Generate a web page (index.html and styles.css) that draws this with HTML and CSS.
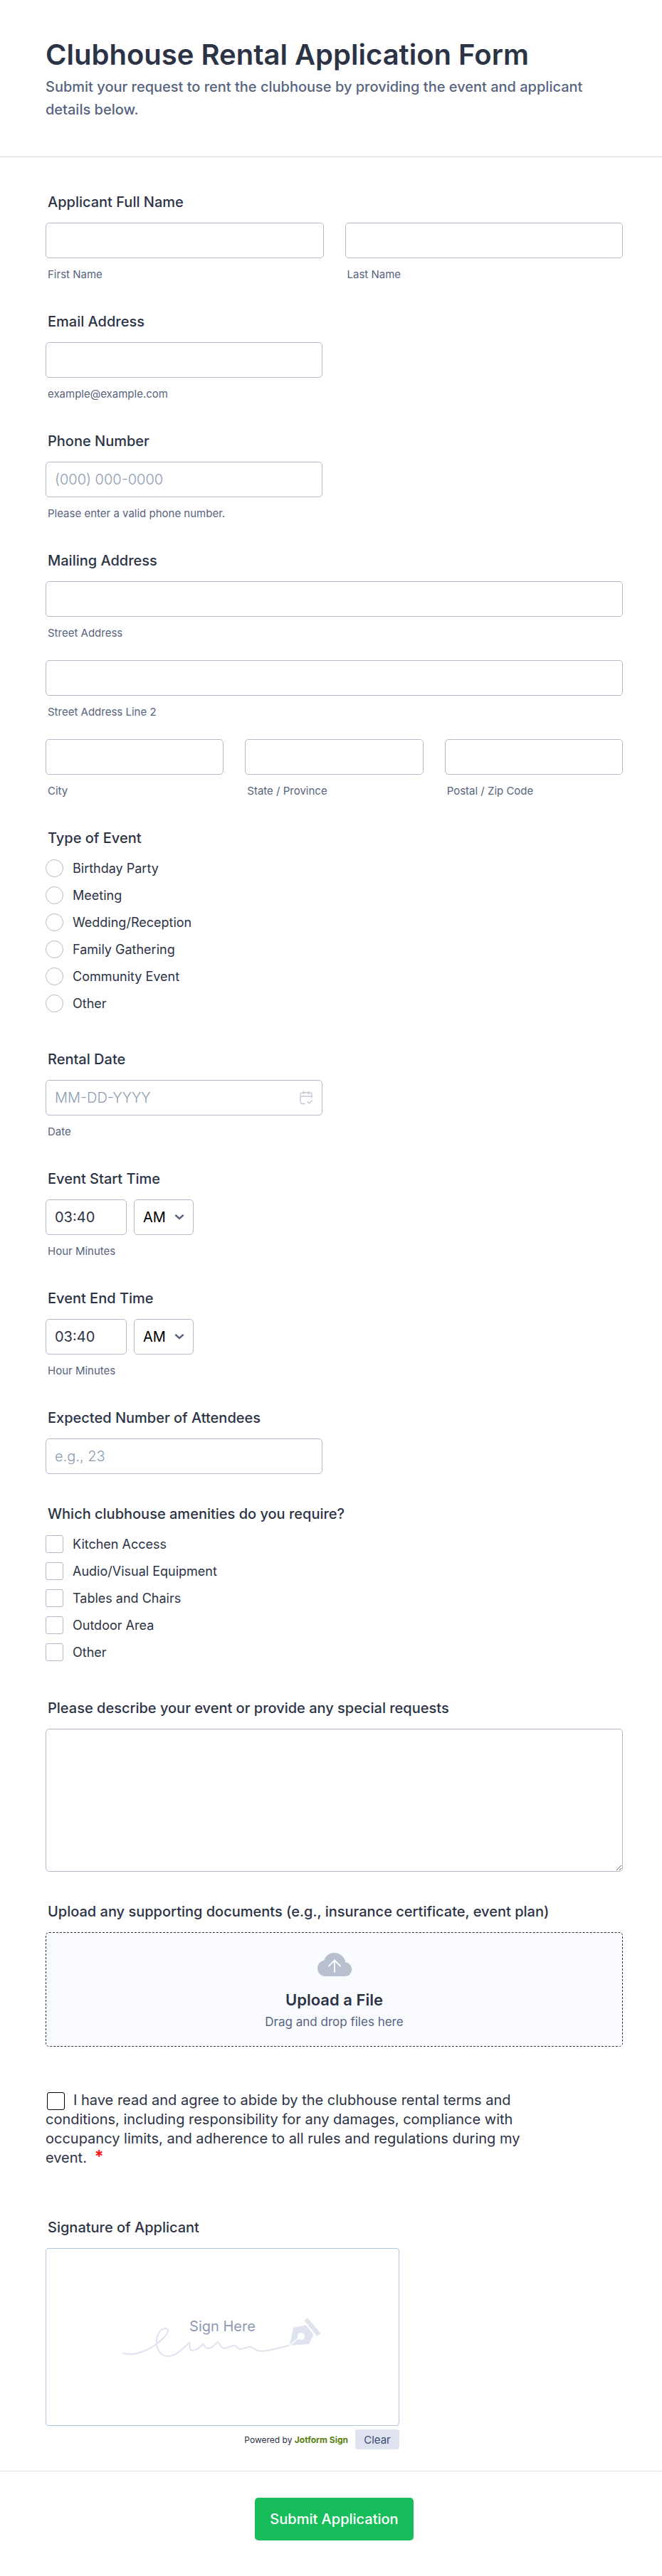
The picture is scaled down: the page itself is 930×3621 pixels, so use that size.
FILE: index.html
```html
<!DOCTYPE html>
<html lang="en">
  <head>
    <title>Clubhouse Rental Application Form</title>
    <meta http-equiv="Content-Type" content="text/html; charset=UTF-8"/>
    <meta name="viewport" content="width=device-width, initial-scale=1"/>
    <link rel="stylesheet" href="styles.css">
  </head>
  <body>
    <form class="form">
      <header class="form-header">
        <h1>Clubhouse Rental Application Form</h1>
        <p>Submit your request to rent the clubhouse by providing the event and applicant details below.</p>
      </header>

      <div class="form-body">
        <fieldset class="field">
          <legend class="label">Applicant Full Name</legend>
          <div class="cols cols-2">
            <div class="sub">
              <input type="text" id="first" class="input">
              <label for="first" class="sublabel">First Name</label>
            </div>
            <div class="sub">
              <input type="text" id="last" class="input">
              <label for="last" class="sublabel">Last Name</label>
            </div>
          </div>
        </fieldset>

        <div class="field">
          <label for="email" class="label">Email Address</label>
          <input type="email" id="email" class="input half" aria-describedby="email-hint">
          <span id="email-hint" class="sublabel">example@example.com</span>
        </div>

        <div class="field">
          <label for="phone" class="label">Phone Number</label>
          <input type="tel" id="phone" class="input half" placeholder="(000) 000-0000" aria-describedby="phone-hint">
          <span id="phone-hint" class="sublabel">Please enter a valid phone number.</span>
        </div>

        <fieldset class="field">
          <legend class="label">Mailing Address</legend>
          <div class="address">
            <div class="sub">
              <input type="text" id="street" class="input">
              <label for="street" class="sublabel">Street Address</label>
            </div>
            <div class="sub">
              <input type="text" id="street2" class="input">
              <label for="street2" class="sublabel">Street Address Line 2</label>
            </div>
            <div class="cols cols-3">
              <div class="sub">
                <input type="text" id="city" class="input">
                <label for="city" class="sublabel">City</label>
              </div>
              <div class="sub">
                <input type="text" id="state" class="input">
                <label for="state" class="sublabel">State / Province</label>
              </div>
              <div class="sub">
                <input type="text" id="zip" class="input">
                <label for="zip" class="sublabel">Postal / Zip Code</label>
              </div>
            </div>
          </div>
        </fieldset>

        <fieldset class="field field-choices">
          <legend class="label">Type of Event</legend>
          <div class="choices">
            <label class="choice"><input type="radio" name="type"> Birthday Party</label>
            <label class="choice"><input type="radio" name="type"> Meeting</label>
            <label class="choice"><input type="radio" name="type"> Wedding/Reception</label>
            <label class="choice"><input type="radio" name="type"> Family Gathering</label>
            <label class="choice"><input type="radio" name="type"> Community Event</label>
            <label class="choice"><input type="radio" name="type"> Other</label>
          </div>
        </fieldset>

        <div class="field">
          <label for="date" class="label">Rental Date</label>
          <div class="date half">
            <input type="text" id="date" class="input" placeholder="MM-DD-YYYY" aria-describedby="date-hint">
            <svg class="date-icon" width="18" height="20" viewBox="0 0 18 20" fill="none" stroke="#c3c9d9" stroke-width="1.4" stroke-linecap="round" stroke-linejoin="round">
              <path d="M17 10V5.5A2.500 2.500 0 0 0 14.500 3h-11A2.500 2.500 0 0 0 1 5.500v10.500A2.500 2.500 0 0 0 3.500 18.500H7M1 8h16M5.500 1v4M12.500 1v4M11 15.500l2.300 2.500 4-4"/>
            </svg>
          </div>
          <span id="date-hint" class="sublabel">Date</span>
        </div>

        <fieldset class="field">
          <legend class="label">Event Start Time</legend>
          <div class="time">
            <input type="text" id="start" class="input" value="03:40">
            <div class="select">
              <select class="input" aria-label="AM or PM"><option>AM</option><option>PM</option></select>
              <svg class="chevron" width="14" height="10" viewBox="0 0 14 10" fill="none" stroke="#5a627f" stroke-width="2.4" stroke-linecap="round" stroke-linejoin="round"><path d="M2 2.500l5 4.500 5-4.500"/></svg>
            </div>
          </div>
          <label for="start" class="sublabel">Hour Minutes</label>
        </fieldset>

        <fieldset class="field">
          <legend class="label">Event End Time</legend>
          <div class="time">
            <input type="text" id="end" class="input" value="03:40">
            <div class="select">
              <select class="input" aria-label="AM or PM"><option>AM</option><option>PM</option></select>
              <svg class="chevron" width="14" height="10" viewBox="0 0 14 10" fill="none" stroke="#5a627f" stroke-width="2.4" stroke-linecap="round" stroke-linejoin="round"><path d="M2 2.500l5 4.500 5-4.500"/></svg>
            </div>
          </div>
          <label for="end" class="sublabel">Hour Minutes</label>
        </fieldset>

        <div class="field">
          <label for="count" class="label">Expected Number of Attendees</label>
          <input type="text" id="count" class="input half" placeholder="e.g., 23">
        </div>

        <fieldset class="field field-choices">
          <legend class="label">Which clubhouse amenities do you require?</legend>
          <div class="choices">
            <label class="choice"><input type="checkbox"> Kitchen Access</label>
            <label class="choice"><input type="checkbox"> Audio/Visual Equipment</label>
            <label class="choice"><input type="checkbox"> Tables and Chairs</label>
            <label class="choice"><input type="checkbox"> Outdoor Area</label>
            <label class="choice"><input type="checkbox"> Other</label>
          </div>
        </fieldset>

        <div class="field">
          <label for="notes" class="label">Please describe your event or provide any special requests</label>
          <textarea id="notes" class="input notes"></textarea>
        </div>

        <div class="field">
          <span class="label" id="upload-label">Upload any supporting documents (e.g., insurance certificate, event plan)</span>
          <button type="button" class="upload" aria-describedby="upload-label">
            <svg width="48" height="33" viewBox="0 0 48 33">
              <path fill="#b8bfcf" d="M11 33C5 33 0 28 0 22 0 16 3.500 12 9 11 11 4.500 16.500 0 23.500 0 31.500 0 38 5.500 39.500 13.500 44.500 14 48 18 48 23 48 29 44 33 38.500 33z"/>
              <path fill="none" stroke="#fff" stroke-width="1.8" stroke-linecap="round" stroke-linejoin="round" d="M24 27V10.500M16 18.500l8-8 8 8"/>
            </svg>
            <strong>Upload a File</strong>
            <span>Drag and drop files here</span>
          </button>
        </div>

        <div class="terms">
          <input type="checkbox" id="terms" required><label for="terms">I have read and agree to abide by the clubhouse rental terms and conditions, including responsibility for any damages, compliance with occupancy limits, and adherence to all rules and regulations during my event. <span class="required">*</span></label>
        </div>

        <div class="field signature">
          <span class="label">Signature of Applicant</span>
          <div class="pad">
            <svg width="280" height="68" viewBox="0 0 280 68" fill="none">
              <path stroke="#dfe3f0" stroke-width="2" stroke-linecap="round" stroke-linejoin="round" d="M0 57C12 60 22 57 31 53 43 48 49 43 56 36 62 30 67 22 59 22 52 22 47 32 47 40 47 52 53 61 62 61 75 61 84 50 93 42 95 46 91 53 98 53 104 53 109 47 112.500 44 114 46 115 50 120 50 126 50 129 43 133.500 41 136 43 136 50 142 50 148 50 151 46 156.500 46 160 47 160 51 165 51 171 51 174 47 179 48 184 50 187 54 194 54 206 54 219 49 233 46"/>
              <path fill="#dfe3f0" d="M234 46l5-25 18-4 10.500 14-6.500 13zM254.500 11l4.500-4 18.500 22-5 4z"/>
              <circle cx="250" cy="33" r="5" fill="#fff"/>
              <path stroke="#fff" stroke-width="1.600" d="M233 47l15-13"/>
            </svg>
            <span>Sign Here</span>
          </div>
          <div class="pad-footer">
            <span>Powered by <a href="#">Jotform Sign</a></span>
            <button type="button" class="clear">Clear</button>
          </div>
        </div>
      </div>

      <footer class="form-footer">
        <button type="submit" class="submit">Submit Application</button>
      </footer>
    </form>
  </body>
</html>
```
FILE: styles.css
```css
* {
  box-sizing: border-box;
}

body {
  margin: 0;
  background: #fff;
  color: #2c3345;
  font-family: Inter, sans-serif;
  font-size: 20px;
}

input, select, textarea, button {
  font-family: inherit;
}

.form-header {
  padding: 52px 64px 50px;
  border-bottom: 1px solid #d7d8e1;
}

.form-header h1 {
  margin: 0;
  font-size: 40px;
  line-height: 50px;
  font-weight: 600;
}

.form-header p {
  margin: 4px 0 0;
  color: #57647e;
  font-weight: 500;
  line-height: 32px;
}

.form-body {
  padding: 48px 55px 30px 64px;
}

.field {
  display: flex;
  flex-direction: column;
  min-width: 0;
  margin: 0 0 41px;
  padding: 0;
  border: 0;
}

.label {
  margin-bottom: 14px;
  padding: 0 3px;
  line-height: 30px;
  font-weight: 500;
}

.cols {
  display: grid;
  gap: 30px;
}

.cols-2 {
  grid-template-columns: repeat(2, 1fr);
}

.cols-3 {
  grid-template-columns: repeat(3, 1fr);
}

.address {
  display: flex;
  flex-direction: column;
  gap: 28px;
}

.sub {
  display: flex;
  flex-direction: column;
}

.input {
  width: 100%;
  height: 50px;
  padding: 0 12px;
  border: 1px solid #b4b9c9;
  border-radius: 5px;
  background: #fff;
  color: #2c3345;
  font-size: 20px;
}

.input::placeholder {
  color: #8d9cb3;
  font-weight: 300;
  opacity: 1;
}

.half {
  width: 48%;
}

.sublabel {
  margin-top: 13px;
  padding-left: 3px;
  color: #57647e;
  font-size: 15px;
  line-height: 20px;
}

.field-choices {
  margin-bottom: 51px;
}

.field-choices .label {
  margin-bottom: 15px;
}

.choices {
  display: flex;
  flex-direction: column;
  gap: 13px;
}

.choice {
  display: flex;
  align-items: center;
  gap: 13px;
  font-size: 18px;
  line-height: 25px;
}

.choice input {
  appearance: none;
  width: 25px;
  height: 25px;
  margin: 0;
  border: 1px solid #b4b9c9;
  border-radius: 3px;
}

.choice input[type="radio"] {
  border-radius: 50%;
}

.date {
  position: relative;
}

.date .input {
  display: block;
}

.date-icon {
  position: absolute;
  top: 15px;
  right: 14px;
}

.time {
  display: flex;
  gap: 10px;
}

.time > .input {
  width: 114px;
}

.select {
  position: relative;
  width: 84px;
}

.select .input {
  appearance: none;
  color: #000;
}

.chevron {
  position: absolute;
  top: 20px;
  right: 13px;
  pointer-events: none;
}

.notes {
  display: block;
  height: 201px;
  resize: vertical;
}

.upload {
  display: flex;
  flex-direction: column;
  align-items: center;
  padding: 28px 22px 22px;
  border: 1px dashed #2c3345;
  border-radius: 5px;
  background: #fafbff;
  color: #57647e;
  font-size: 17px;
  line-height: 24px;
}

.upload strong {
  margin: 18px 0 4px;
  color: #2c3345;
  font-size: 22px;
  line-height: 30px;
  font-weight: 600;
}

.terms {
  max-width: 680px;
  margin: 62px 0 69px;
  line-height: 27px;
}

.terms input {
  appearance: none;
  width: 25px;
  height: 25px;
  margin: 0 12px 0 2px;
  border: 1px solid #000;
  border-radius: 3px;
  vertical-align: middle;
}

.required {
  margin-left: 5px;
  color: #ff1a1a;
  font-weight: 700;
  font-size: 24px;
  line-height: 20px;
}

.signature {
  max-width: 497px;
  margin: 0;
}

.pad {
  position: relative;
  display: flex;
  align-items: center;
  justify-content: center;
  height: 250px;
  border: 1px solid #b3c4de;
  border-radius: 4px;
}

.pad svg {
  overflow: visible;
}

.pad span {
  position: absolute;
  top: 95px;
  color: #8d9ab5;
  line-height: 28px;
}

.pad-footer {
  display: flex;
  align-items: center;
  justify-content: flex-end;
  gap: 10px;
  margin-top: 5px;
  font-size: 12px;
}

.pad-footer a {
  color: #5a8010;
  font-weight: 700;
  text-decoration: none;
}

.clear {
  width: 62px;
  height: 28px;
  padding: 0;
  border: 0;
  border-radius: 4px;
  background: #dfe3f0;
  color: #3c4a73;
  font-size: 15px;
}

.form-footer {
  display: flex;
  justify-content: center;
  padding: 37px 55px 49px 64px;
  border-top: 1px solid #dde4f0;
}

.submit {
  height: 60px;
  padding: 0 21px;
  border: 0;
  border-radius: 5px;
  background: #18bd5b;
  color: #fff;
  font-size: 20px;
  font-weight: 500;
}
```
